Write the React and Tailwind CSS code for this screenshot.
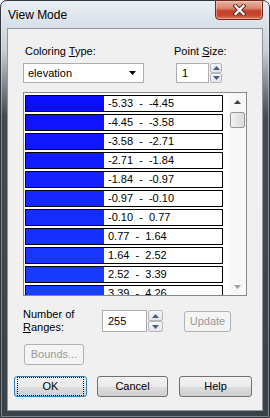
import React from "react";

const rows = [
  ["-5.33", "-4.45"],
  ["-4.45", "-3.58"],
  ["-3.58", "-2.71"],
  ["-2.71", "-1.84"],
  ["-1.84", "-0.97"],
  ["-0.97", "-0.10"],
  ["-0.10", "0.77"],
  ["0.77", "1.64"],
  ["1.64", "2.52"],
  ["2.52", "3.39"],
  ["3.39", "4.26"],
];

function Spin({ w, h }) {
  return (
    <div className={`flex flex-col ${w}`}>
      {[0, 1].map((i) => (
        <div
          key={i}
          className={`${h} flex items-center justify-center border border-[#b4b8bd] rounded-[2px] bg-[linear-gradient(#f6f7f8,#e2e5e9)]`}
        >
          <svg width="7" height="4" viewBox="0 0 7 4">
            {i === 0 ? (
              <polygon points="0,4 7,4 3.5,0" fill="#4b5d78" />
            ) : (
              <polygon points="0,0 7,0 3.5,4" fill="#4b5d78" />
            )}
          </svg>
        </div>
      ))}
    </div>
  );
}

function Btn({ children, className = "", disabled, def }) {
  return (
    <div
      className={`h-[21px] flex items-center justify-center rounded-[3px] leading-[13px] ${
        disabled
          ? "border border-[#adb2b5] bg-[#f4f4f4] text-[#9a9a9a]"
          : def
          ? "border border-[#3c7fb1] bg-[linear-gradient(#f2f2f2_0%,#ebebeb_50%,#dddddd_51%,#cfcfcf_100%)] text-black"
          : "border border-[#707070] bg-[linear-gradient(#f2f2f2_0%,#ebebeb_50%,#dddddd_51%,#cfcfcf_100%)] text-black"
      } ${className}`}
    >
      {def ? (
        <div className="w-full h-full m-[2px] border border-dotted border-black flex items-center justify-center rounded-[1px]">
          {children}
        </div>
      ) : (
        children
      )}
    </div>
  );
}

export default function App() {
  return (
    <div className="w-[270px] h-[418px] bg-white font-['Liberation_Sans',Arial,sans-serif] text-[11px] text-black">
      <div className="w-full h-full flex flex-col rounded-t-[7px] border border-[#2f363d] bg-[linear-gradient(180deg,#e9eef3_0px,#d9e0e7_24px,#c6ced6_50px,#7d858e_85px,#444b53_115px,#3a4148_100%)] shadow-[inset_0_0_0_1px_rgba(255,255,255,0.35)]">
        {/* Title bar */}
        <div className="h-[27px] flex items-start justify-between shrink-0">
          <div className="ml-[7px] mt-[7px] text-[12px] leading-[15px]">View Mode</div>
          <div className="mr-[6px] -mt-[1px] w-[48px] h-[20px] rounded-b-[4px] border border-[#6e2a1f] bg-[linear-gradient(180deg,#eab3a3_0%,#d98670_40%,#c6402a_55%,#c9452f_80%,#dd7d62_100%)] flex items-center justify-center shadow-[inset_0_0_0_1px_rgba(255,220,210,0.45)]">
            <svg width="13" height="12" viewBox="0 0 13 12">
              <path d="M2.5 2 L10.5 10 M10.5 2 L2.5 10" stroke="#5a2418" strokeWidth="4.2" strokeLinecap="square" />
              <path d="M2.5 2 L10.5 10 M10.5 2 L2.5 10" stroke="#ffffff" strokeWidth="2.3" strokeLinecap="square" />
            </svg>
          </div>
        </div>

        {/* Client area */}
        <div className="mx-[6px] mb-[6px] flex-1 border border-[#8e969f] bg-[#f0f0f0] flex flex-col">
          {/* top controls */}
          <div className="pt-[16px] flex ml-[15px] gap-[30px]">
            <div className="flex flex-col">
              <div className="pl-[2px] leading-[13px]">
                Coloring <span className="underline">T</span>ype:
              </div>
              <div className="mt-[5px] w-[121px] h-[20px] border border-[#abadb3] bg-white flex items-center justify-between pl-[4px] pr-[7px]">
                <span className="leading-[13px]">elevation</span>
                <svg width="7" height="4" viewBox="0 0 7 4">
                  <polygon points="0,0 7,0 3.5,4" fill="#000" />
                </svg>
              </div>
            </div>
            <div className="flex flex-col">
              <div className="leading-[13px]">
                Point <span className="underline">S</span>ize:
              </div>
              <div className="mt-[5px] ml-[2px] flex gap-[1px]">
                <div className="w-[33px] h-[20px] border border-[#abadb3] border-t-[#abadb3] bg-white pl-[5px] flex items-center leading-[13px]">
                  1
                </div>
                <Spin w="w-[12px]" h="h-[10px]" />
              </div>
            </div>
          </div>

          {/* list box */}
          <div className="mt-[9px] ml-[15px] w-[224px] h-[204px] border border-[#828790] bg-white flex">
            <div className="flex-1 overflow-hidden pl-[1px] pt-[2px]">
              {rows.map(([a, b], i) => {
                const t = i / (rows.length - 1);
                const g = Math.round(14 + t * 50);
                const r = Math.round(14 + t * 12);
                return (
                  <div key={i} className="w-[198px] h-[17px] mb-[2px] border border-black flex bg-white">
                    <div className="w-[78px] h-full" style={{ backgroundColor: `rgb(${r},${g},255)` }} />
                    <div className="pl-[4px] leading-[15px] whitespace-pre">{`${a}  -  ${b}`}</div>
                  </div>
                );
              })}
            </div>
            <div className="w-[17px] h-full bg-[#f7f7f7] flex flex-col">
              <div className="h-[17px] flex items-center justify-center">
                <svg width="7" height="4" viewBox="0 0 7 4">
                  <polygon points="0,4 7,4 3.5,0" fill="#3f3f3f" />
                </svg>
              </div>
              <div className="mt-[2px] ml-[1px] w-[15px] h-[16px] rounded-[2px] border border-[#979797] bg-[linear-gradient(90deg,#f3f3f3,#e6e6e6_50%,#d9d9d9)]" />
              <div className="flex-1" />
              <div className="h-[17px] flex items-center justify-center">
                <svg width="7" height="4" viewBox="0 0 7 4">
                  <polygon points="0,0 7,0 3.5,4" fill="#a0a0a0" />
                </svg>
              </div>
            </div>
          </div>

          {/* number of ranges */}
          <div className="mt-[12px] ml-[15px] flex items-start">
            <div className="w-[79px] leading-[13px]">
              Number of
              <br />
              <span className="underline">R</span>anges:
            </div>
            <div className="mt-[2px] flex gap-[1px]">
              <div className="w-[45px] h-[22px] border border-[#abadb3] bg-white pl-[5px] flex items-center leading-[13px]">
                255
              </div>
              <Spin w="w-[15px]" h="h-[11px]" />
            </div>
            <Btn disabled className="mt-[3px] ml-[21px] w-[47px]">
              Update
            </Btn>
          </div>

          <Btn disabled className="mt-[10px] ml-[16px] w-[60px]">
            Bounds...
          </Btn>

          <div className="mt-[11px] ml-[6px] flex">
            <Btn def className="w-[73px]">
              OK
            </Btn>
            <Btn className="ml-[10px] w-[71px]">Cancel</Btn>
            <Btn className="ml-[11px] w-[73px]">Help</Btn>
          </div>
        </div>
      </div>
    </div>
  );
}
